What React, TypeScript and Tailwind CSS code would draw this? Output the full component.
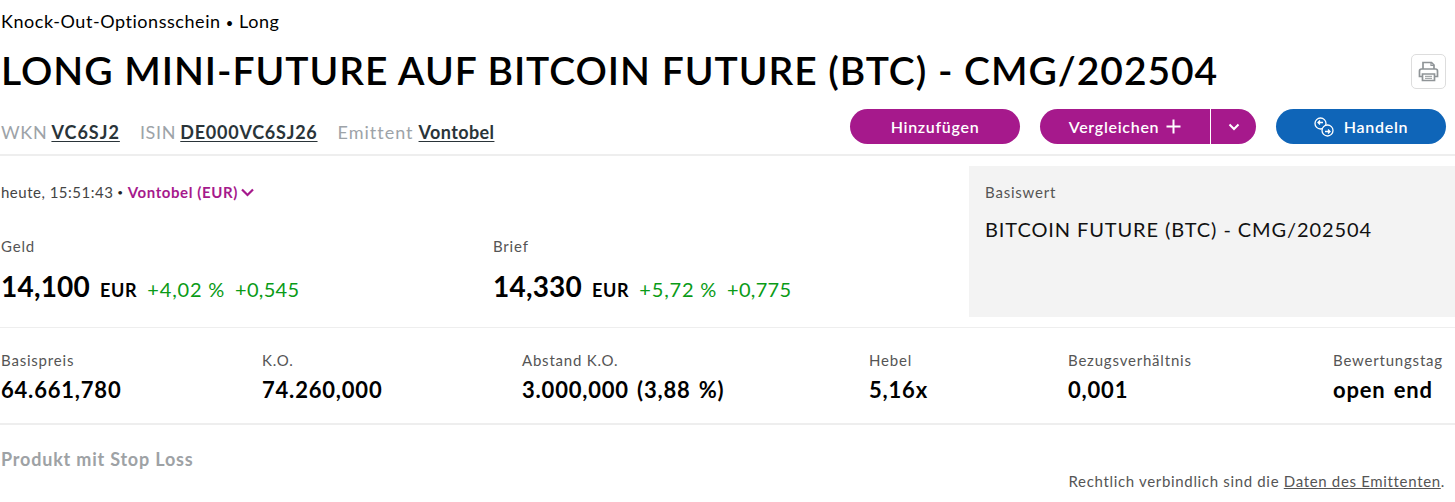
import React from "react";

const font = "font-['Lato','Noto_Sans',sans-serif]";

function Stat({ label, value, className }: { label: string; value: string; className: string }) {
  return (
    <div className={className}>
      <div className="text-[15px] leading-[20px] tracking-[0.8px] text-[#555]">{label}</div>
      <div className="mt-[6px] text-[22px] leading-[28px] tracking-[0.8px] [word-spacing:2px] font-bold text-black whitespace-nowrap">{value}</div>
    </div>
  );
}

function Quote({ label, price, pct, abs, className }: { label: string; price: string; pct: string; abs: string; className: string }) {
  return (
    <div className={className}>
      <div className="text-[15px] leading-[20px] tracking-[0.8px] text-[#555]">{label}</div>
      <div className="mt-[12px] flex items-baseline whitespace-nowrap">
        <span className="text-[28px] leading-[36px] tracking-[0.2px] font-bold text-black">{price}</span>
        <span className="ml-[10px] text-[18px] tracking-[0.7px] font-bold text-black">EUR</span>
        <span className="ml-[10px] text-[20px] tracking-[0.8px] text-[#0a9b17]">{pct}</span>
        <span className="ml-[10px] text-[20px] tracking-[0.3px] text-[#0a9b17]">{abs}</span>
      </div>
    </div>
  );
}

export default function App() {
  return (
    <div className={`${font} w-[1455px] h-[502px] overflow-hidden bg-white text-black`}>
      <div className="pl-[1px] pt-[10px] text-[18px] leading-[22px] tracking-[0.55px]">
        Knock-Out-Optionsschein <span className="text-[13px] leading-none">•</span> Long
      </div>
      <div className="flex items-start justify-between pl-[1px] pr-[9px] pt-[13px]">
        <h1 className="text-[39px] leading-[50px] tracking-[0.96px] font-semibold whitespace-nowrap">LONG MINI-FUTURE AUF BITCOIN FUTURE (BTC) - CMG/202504</h1>
        <button className="mt-[9px] flex h-[35px] w-[35px] items-center justify-center rounded-[5px] border border-[#ddd] bg-white">
          <svg width="21" height="21" viewBox="0 0 21 21" fill="none" stroke="#8f9497" strokeWidth="1.700">
            <path d="M5 8V1.500h8.500L16 4v4" />
            <path d="M13 1.500V4.500h3" strokeWidth="1.200" />
            <path d="M4.500 15.500H1.500V10a2 2 0 0 1 2-2h14a2 2 0 0 1 2 2v5.500h-3" />
            <path d="M4.500 13h12v6.500h-12z" />
            <path d="M7 15.300h7M7 17.300h7" strokeWidth="1" />
          </svg>
        </button>
      </div>
      <div className="flex items-end justify-between border-b-2 border-[#eee] h-[61px] pl-[1px] pr-[9px] pb-[10px]">
        <div className="flex items-center text-[18px] leading-[24px] tracking-[0.7px] text-[#9da3a8] whitespace-nowrap">
          <span>WKN</span>
          <a className="ml-[4px] font-bold tracking-[1px] text-[#2a3439] underline underline-offset-2">VC6SJ2</a>
          <span className="ml-[20px]">ISIN</span>
          <a className="ml-[4px] font-bold tracking-[0.75px] text-[#2a3439] underline underline-offset-2">DE000VC6SJ26</a>
          <span className="ml-[20px] tracking-[1px]">Emittent</span>
          <a className="ml-[5px] font-bold tracking-[0.4px] text-[#2a3439] underline underline-offset-2">Vontobel</a>
        </div>
        <div className="flex items-center text-[16px] tracking-[0.7px] font-semibold text-white">
          <button className="h-[35px] w-[170px] rounded-full bg-[#a6198c]">Hinzufügen</button>
          <div className="ml-[20px] flex h-[35px] w-[216px] rounded-full bg-[#a6198c]">
            <button className="flex w-[171px] items-center justify-center gap-[7px] border-r border-white">
              Vergleichen
              <svg width="15" height="15" viewBox="0 0 15 15" stroke="white" strokeWidth="2"><path d="M7.500 0.500v14M0.500 7.500h14" /></svg>
            </button>
            <button className="flex flex-1 items-center justify-center">
              <svg width="12" height="8" viewBox="0 0 12 8" fill="none" stroke="white" strokeWidth="2"><path d="M1.500 1.500 6 6l4.500-4.500" /></svg>
            </button>
          </div>
          <button className="ml-[20px] flex h-[35px] w-[170px] items-center justify-center gap-[10px] rounded-full bg-[#0f65b8]">
            <svg width="20" height="20" viewBox="0 0 20 20" fill="none" stroke="white" strokeWidth="1.300">
              <circle cx="6.500" cy="6.500" r="5.500" />
              <circle cx="13.500" cy="13.500" r="5.500" fill="#0f65b8" />
              <path d="M9 5.500H4.500M6 3.500 4 5.500l2 2M11 14.500h4.500M14 12.500l2 2-2 2" />
            </svg>
            Handeln
          </button>
        </div>
      </div>
      <div className="flex h-[172px] border-b border-[#eee]">
        <div className="flex-1 pl-[1px]">
          <div className="pt-[26px] flex items-center text-[15px] leading-[20px] tracking-[0.5px] text-[#444]">
            heute, 15:51:43 <span className="mx-[4px] text-[10px] text-[#222]">•</span><span className="font-bold tracking-[0.6px] text-[#a6198c]">Vontobel (EUR)</span>
            <svg className="ml-[3px]" width="13" height="9" viewBox="0 0 13 9" fill="none" stroke="#a6198c" strokeWidth="2.200"><path d="M1 1.500 6.500 7 12 1.500" /></svg>
          </div>
          <div className="mt-[34px] flex">
            <Quote className="w-[492px]" label="Geld" price="14,100" pct="+4,02 %" abs="+0,545" />
            <Quote className="" label="Brief" price="14,330" pct="+5,72 %" abs="+0,775" />
          </div>
        </div>
        <div className="mt-[10px] h-[151px] w-[486px] bg-[#f3f3f3] pl-[16px] pt-[16px]">
          <div className="text-[15px] leading-[20px] tracking-[0.8px] text-[#555]">Basiswert</div>
          <div className="mt-[14px] text-[20px] leading-[26px] tracking-[0.9px] text-[#111]">BITCOIN FUTURE (BTC) - CMG/202504</div>
        </div>
      </div>
      <div className="flex h-[97px] border-b-2 border-[#eee] pl-[1px] pt-[22px]">
        <Stat className="w-[261px]" label="Basispreis" value="64.661,780" />
        <Stat className="w-[260px]" label="K.O." value="74.260,000" />
        <Stat className="w-[347px]" label="Abstand K.O." value="3.000,000 (3,88 %)" />
        <Stat className="w-[199px]" label="Hebel" value="5,16x" />
        <Stat className="w-[265px]" label="Bezugsverhältnis" value="0,001" />
        <Stat className="" label="Bewertungstag" value="open end" />
      </div>
      <div className="flex h-[76px] flex-col pl-[1px]">
        <div className="pt-[23px] text-[18px] leading-[22px] tracking-[0.8px] font-bold text-[#9ea2a5]">Produkt mit Stop Loss</div>
        <div className="pt-[1px] pr-[10px] text-right text-[15px] leading-[20px] tracking-[0.67px] text-[#555]">
          Rechtlich verbindlich sind die <a className="underline">Daten des Emittenten</a>.
        </div>
      </div>
    </div>
  );
}
